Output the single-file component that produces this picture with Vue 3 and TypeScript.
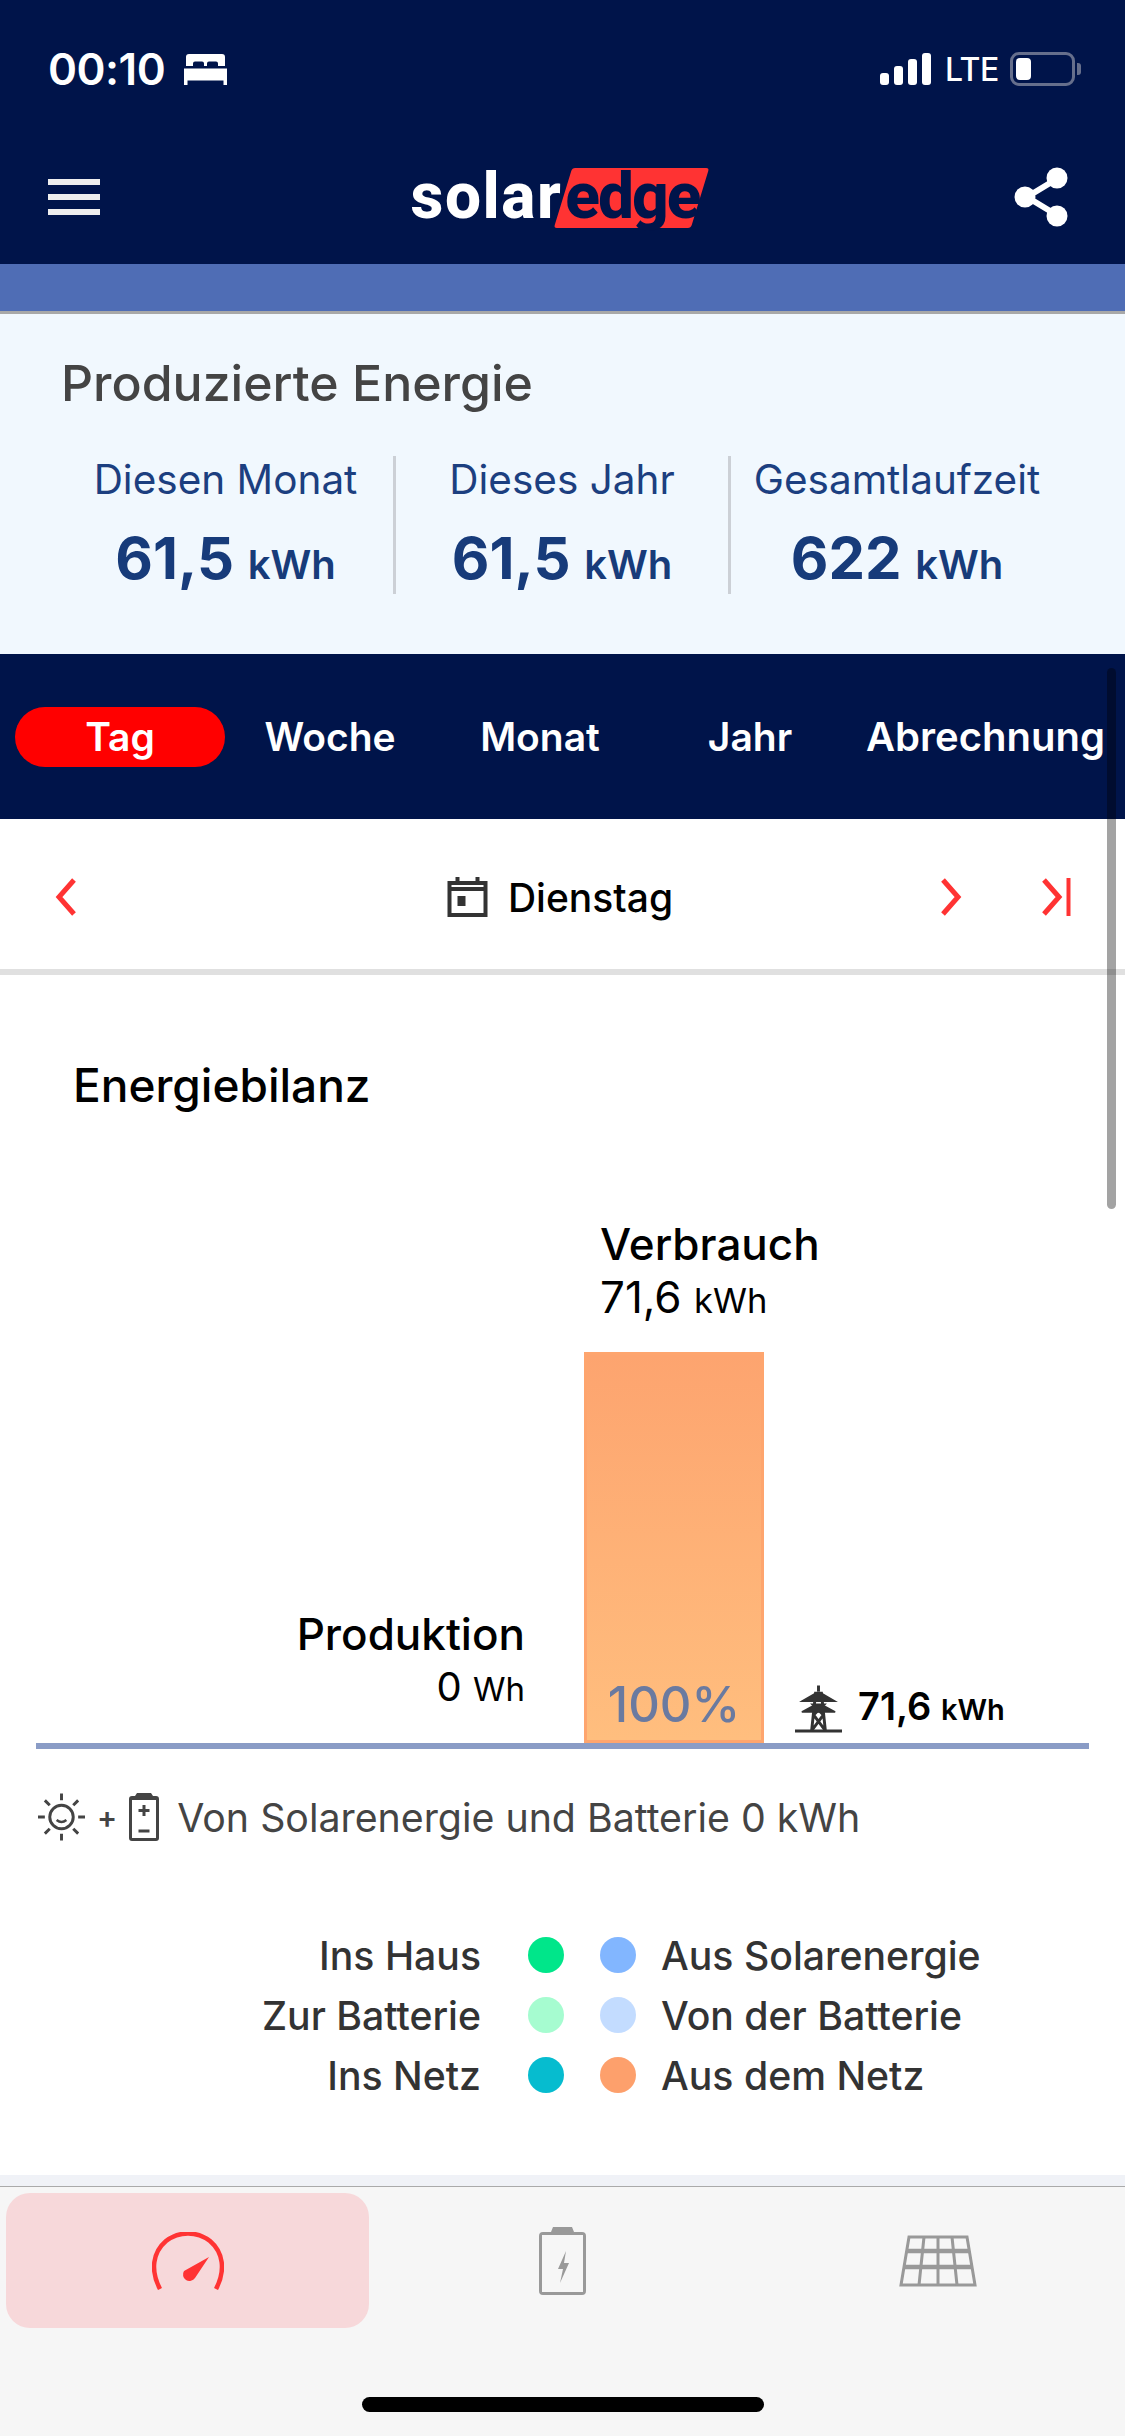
<template>
  <div class="app">
    <header class="top">
      <div class="status">
        <div class="status-left">
          <span class="time">00:10</span>
          <svg class="bed" viewBox="0 0 43 31"><path d="M5 0h33a3 3 0 0 1 3 3v9h-7V9.500a2 2 0 0 0-2-2h-7a2 2 0 0 0-2 2V12h-3V9.500a2 2 0 0 0-2-2h-7a2 2 0 0 0-2 2V12H2V3a3 3 0 0 1 3-3zM0 14.500h43V31h-3.500v-4.500h-36V31H0z" fill="#fff"/></svg>
        </div>
        <div class="status-right">
          <div class="signal">
            <i v-for="h in signalBars" :key="h" :style="{ height: `${h}px` }"></i>
          </div>
          <span class="lte">LTE</span>
          <div class="batt"><i></i></div>
          <div class="batt-nub"></div>
        </div>
      </div>
      <nav class="nav">
        <div class="burger"><i></i><i></i><i></i></div>
        <div class="logo">
          <span class="solar">solar</span>
          <span class="edge">edge</span>
        </div>
        <svg class="share" viewBox="0 0 54 60">
          <path d="M41 13 13 30l28 17" fill="none" stroke="#fff" stroke-width="6"/>
          <circle cx="43" cy="11" r="10.500" fill="#fff"/>
          <circle cx="11" cy="30" r="10.500" fill="#fff"/>
          <circle cx="43" cy="49" r="10.500" fill="#fff"/>
        </svg>
      </nav>
    </header>
    <div class="band"></div>

    <section class="produced">
      <h2>Produzierte Energie</h2>
      <div class="stats">
        <div v-for="s in stats" :key="s.label" class="stat">
          <div class="stat-label">{{ s.label }}</div>
          <div class="stat-value">{{ s.value }} <small>kWh</small></div>
        </div>
      </div>
    </section>

    <div class="tabs">
      <span v-for="t in tabs" :key="t" class="tab" :class="{ on: t === 'Tag' }">{{ t }}</span>
    </div>

    <div class="date-row">
      <svg class="chev" viewBox="0 0 22 38"><path d="M19 2 4 19l15 17" fill="none" stroke="#f33" stroke-width="5"/></svg>
      <div class="date">
        <svg class="cal" viewBox="0 0 40 40">
          <path d="M0 4h8V0h4v4h16V0h4v4h8v36H0z M4 14v22h32V14z M4 8v2h32V8z" fill="#333" fill-rule="evenodd"/>
          <rect x="10" y="19" width="8" height="10" fill="#333"/>
        </svg>
        <span>Dienstag</span>
      </div>
      <div class="date-next">
        <svg class="chev" viewBox="0 0 22 38"><path d="M3 2l15 17L3 36" fill="none" stroke="#f33" stroke-width="5"/></svg>
        <svg class="chev-last" viewBox="0 0 30 40"><path d="M3 3l15 17L3 37" fill="none" stroke="#f33" stroke-width="5"/><path d="M27.500 1v38" stroke="#f33" stroke-width="4"/></svg>
      </div>
    </div>

    <main class="main">
      <h3>Energiebilanz</h3>
      <div class="chart">
        <div class="prod">
          <div class="name">Produktion</div>
          <div class="amount">0 <small>Wh</small></div>
        </div>
        <div class="use">
          <div class="name">Verbrauch</div>
          <div class="amount">71,6 <small>kWh</small></div>
          <div class="bar">100%</div>
        </div>
        <div class="grid-val">
          <svg class="tower" viewBox="0 0 48 48" fill="none" stroke="#333" stroke-width="3">
            <path d="M0 46.500h48" />
            <path d="M24 0v6M17 46 21 8h6l4 38M17 46 29 30 19 20h10L19 30l12 16"/>
            <path d="M7 16 21 8h6l14 8zM7 27l13-7h8l13 7z" fill="#333" stroke-width="1.500"/>
          </svg>
          <span>71,6 <small>kWh</small></span>
        </div>
      </div>
      <div class="note">
        <svg class="sun" viewBox="0 0 48 48" fill="none" stroke="#444" stroke-width="3">
          <circle cx="24" cy="24" r="12"/>
          <path d="M19 27q5 4 10 0" stroke-width="2.500"/>
          <path d="M24 0v7M24 41v7M0 24h7M41 24h7M7 7l5 5M36 36l5 5M41 7l-5 5M12 36l-5 5"/>
        </svg>
        <span class="plus">+</span>
        <svg class="note-batt" viewBox="0 0 30 48">
          <path d="M8 0h14l2 3h3a3 3 0 0 1 3 3v39a3 3 0 0 1-3 3H3a3 3 0 0 1-3-3V6a3 3 0 0 1 3-3h3z M3 7v38h24V7z" fill="#444" fill-rule="evenodd"/>
          <path d="M15 12v11M9.500 17.500h11M9.500 38h11" stroke="#444" stroke-width="3"/>
        </svg>
        <span class="note-text">Von Solarenergie und Batterie 0 kWh</span>
      </div>
      <div class="legend">
        <div v-for="row in legend" :key="row.left" class="legend-row">
          <span class="l-left">{{ row.left }}</span>
          <i class="dot" :style="{ background: row.c1 }"></i>
          <i class="dot" :style="{ background: row.c2 }"></i>
          <span class="l-right">{{ row.right }}</span>
        </div>
      </div>
    </main>

    <footer class="bottom">
      <div class="bottom-tabs">
        <div class="btab active">
          <svg viewBox="0 0 72 58" width="72" height="58">
            <path d="M8 57C-2 38 1 20 14 9c13-10 31-10 44 0 13 11 16 29 6 48" fill="none" stroke="#f33" stroke-width="4.500"/>
            <path d="M57 25 43 46a6.500 6.500 0 1 1-11-7z" fill="#f33"/>
          </svg>
        </div>
        <div class="btab">
          <svg viewBox="0 0 47 68" width="47" height="68">
            <path d="M14 0h19l2 5h8a4 4 0 0 1 4 4v55a4 4 0 0 1-4 4H4a4 4 0 0 1-4-4V9a4 4 0 0 1 4-4h8z M3 8v57h41V8z" fill="#999" fill-rule="evenodd"/>
            <path d="M27 24 19 42h5l-3 14 9-20h-5z" fill="#999"/>
          </svg>
        </div>
        <div class="btab">
          <svg viewBox="0 0 78 52" width="78" height="52" fill="none" stroke="#999">
            <path d="M10 2h58l8 48H2z" stroke-width="3"/>
            <path d="M7 16h64M4.500 32h69" stroke-width="4.500"/>
            <path d="M25 2l-5 48M39 2v48M53 2l5 48" stroke-width="3"/>
          </svg>
        </div>
      </div>
      <div class="home"></div>
    </footer>

    <div class="scrollbar"></div>
  </div>
</template>

<script setup lang="ts">
const signalBars = [12, 19, 26, 32];

const stats = [
  { label: "Diesen Monat", value: "61,5" },
  { label: "Dieses Jahr", value: "61,5" },
  { label: "Gesamtlaufzeit", value: "622" },
];

const tabs = ["Tag", "Woche", "Monat", "Jahr", "Abrechnung"];

const legend = [
  { left: "Ins Haus", c1: "#00e68a", c2: "#82b6ff", right: "Aus Solarenergie" },
  { left: "Zur Batterie", c1: "#a6fcd0", c2: "#c3dcff", right: "Von der Batterie" },
  { left: "Ins Netz", c1: "#06bccf", c2: "#fda06c", right: "Aus dem Netz" },
];
</script>

<style>
html,
body {
  margin: 0;
  background: #fff;
}
</style>

<style scoped>
.app {
  position: relative;
  width: 1125px;
  height: 2436px;
  overflow: hidden;
  display: flex;
  flex-direction: column;
  background: #fff;
  font-family: Inter, "Liberation Sans", sans-serif;
  color: #000;
}

.top {
  height: 264px;
  background: #00144a;
  color: #fff;
}

.status {
  height: 138px;
  display: flex;
  align-items: center;
  justify-content: space-between;
  padding: 0 44px 0 48px;
}

.status-left,
.status-right {
  display: flex;
  align-items: center;
}

.time {
  font-size: 44px;
  font-weight: 600;
  letter-spacing: -0.5px;
}

.bed {
  width: 43px;
  height: 31px;
  margin-left: 19px;
}

.signal {
  display: flex;
  align-items: flex-end;
  gap: 5px;
  height: 32px;
}

.signal i {
  width: 9px;
  background: #fff;
  border-radius: 3px;
}

.lte {
  margin-left: 14px;
  font-size: 32px;
  font-weight: 500;
  width: 52px;
  letter-spacing: -0.5px;
}

.batt {
  margin-left: 13px;
  width: 65px;
  height: 34px;
  box-sizing: border-box;
  border: 3px solid #666f8c;
  border-radius: 9px;
  padding: 3px;
}

.batt i {
  display: block;
  width: 15px;
  height: 100%;
  background: #fff;
  border-radius: 4px;
}

.batt-nub {
  width: 4px;
  height: 12px;
  margin-left: 2px;
  background: #666f8c;
  border-radius: 0 3px 3px 0;
}

.nav {
  height: 118px;
  display: flex;
  align-items: center;
  justify-content: space-between;
  padding: 0 57px 0 48px;
}

.burger {
  width: 52px;
  display: flex;
  flex-direction: column;
  gap: 9px;
}

.burger i {
  height: 6px;
  background: #eee;
}

.logo {
  margin-right: 4px;
  display: flex;
  align-items: baseline;
  font-family: Roboto, Inter, sans-serif;
  font-size: 64px;
  line-height: 60px;
  font-weight: 800;
}

.solar {
  color: #fff;
  letter-spacing: 1.500px;
}

.edge {
  position: relative;
  z-index: 0;
  color: #00144a;
  margin-left: 3px;
  letter-spacing: -2px;
}

.edge::before {
  content: "";
  position: absolute;
  z-index: -1;
  left: -2px;
  right: -1px;
  top: 1px;
  height: 60px;
  background: #f33;
  border-radius: 3px;
  transform: skewX(-17deg);
}

.share {
  width: 54px;
  height: 60px;
}

.band {
  height: 50px;
  box-sizing: border-box;
  background: #4f6db5;
  border-bottom: 3px solid #a8a8a8;
}

.produced {
  height: 340px;
  box-sizing: border-box;
  background: #f1f8fe;
  padding: 41px 62px 0 58px;
}

.produced h2 {
  margin: 0 0 45px 3px;
  font-size: 50px;
  line-height: 56px;
  font-weight: 500;
  color: #444;
}

.stats {
  display: grid;
  grid-template-columns: repeat(3, 1fr);
}

.stat {
  height: 138px;
  text-align: center;
  border-left: 3px solid #ccd0d6;
}

.stat:first-child {
  border-left: 0;
}

.stat-label {
  font-size: 40.500px;
  line-height: 48px;
  color: #1c3f80;
  margin-bottom: 19px;
}

.stat-value {
  font-size: 58px;
  line-height: 70px;
  font-weight: 700;
  color: #173b7a;
}

.stat-value small {
  font-size: 40px;
  font-weight: 600;
}

.tabs {
  height: 165px;
  box-sizing: border-box;
  background: #00144a;
  padding: 53px 0 0 15px;
  display: flex;
  align-items: flex-start;
}

.tab {
  width: 210px;
  height: 60px;
  flex: none;
  border-radius: 30px;
  color: #fff;
  font-size: 39px;
  font-weight: 600;
  line-height: 60px;
  text-align: center;
}

.tab.on {
  background: #f00;
}

.tab:last-child {
  margin-left: 11px;
  font-size: 40px;
  white-space: nowrap;
}

.date-row {
  height: 156px;
  box-sizing: border-box;
  border-bottom: 6px solid #e0e0e0;
  padding: 6px 54px 0 55px;
  display: grid;
  grid-template-columns: 1fr auto 1fr;
  align-items: center;
}

.chev {
  width: 22px;
  height: 38px;
}

.date {
  display: flex;
  align-items: center;
  gap: 20px;
  margin-right: 6px;
  font-size: 39px;
  font-weight: 500;
}

.cal {
  width: 41px;
  height: 40px;
}

.date-next {
  display: flex;
  align-items: center;
  justify-content: flex-end;
  gap: 79px;
}

.chev-last {
  width: 30px;
  height: 40px;
}

.main {
  flex: 1;
  padding-top: 83px;
}

.main h3 {
  margin: 0 0 104px 73px;
  font-size: 46px;
  line-height: 54px;
  font-weight: 450;
}

.chart {
  margin: 0 36px;
  border-bottom: 6px solid #8a9cc6;
  display: flex;
  align-items: flex-end;
}

.name {
  font-size: 44px;
  line-height: 56px;
  font-weight: 450;
}

.amount {
  font-size: 44px;
  line-height: 50px;
}

.amount small {
  font-size: 34.500px;
}

.grid-val small {
  font-size: 29px;
}

.prod {
  width: 489px;
  text-align: right;
  padding-bottom: 29px;
}

.prod .amount {
  font-size: 40px;
}

.prod .amount small {
  font-size: 33px;
}

.use {
  margin-left: 59px;
  width: 180px;
}

.use .name,
.use .amount {
  padding-left: 16px;
  white-space: nowrap;
}

.bar {
  box-sizing: border-box;
  height: 391px;
  margin-top: 26px;
  padding-bottom: 6px;
  display: flex;
  align-items: flex-end;
  justify-content: center;
  background: linear-gradient(#fda46f, #ffbe7e);
  border: 3px solid #fea56e;
  color: #6a7aa0;
  font-size: 49px;
  font-weight: 500;
}

.grid-val {
  margin-left: 31px;
  padding-bottom: 10px;
  display: flex;
  align-items: flex-end;
  gap: 16px;
  font-size: 38px;
  line-height: 46px;
  font-weight: 600;
}

.tower {
  width: 47px;
  height: 48px;
}

.note {
  margin: 44px 0 0 38px;
  display: flex;
  align-items: center;
  height: 48px;
  color: #444;
}

.sun {
  width: 47px;
  height: 48px;
}

.plus {
  margin: 0 12px 0 12px;
  font-size: 30px;
  font-weight: 600;
}

.note-batt {
  width: 30px;
  height: 48px;
}

.note-text {
  margin-left: 18px;
  font-size: 39.300px;
}

.legend {
  margin-top: 96px;
  display: flex;
  flex-direction: column;
  gap: 24px;
}

.legend-row {
  display: flex;
  align-items: center;
  height: 36px;
  font-size: 39.200px;
  font-weight: 500;
  color: #333;
}

.l-left {
  width: 481px;
  text-align: right;
}

.dot {
  width: 36px;
  height: 36px;
  border-radius: 50%;
  margin-left: 47px;
}

.dot + .dot {
  margin-left: 36px;
}

.l-right {
  margin-left: 25px;
}

.bottom {
  height: 250px;
  position: relative;
  box-sizing: border-box;
  background: #f6f6f6;
  border-top: 1px solid #aaa;
  box-shadow: 0 -11px 0 #f0f2f7;
}

.bottom-tabs {
  display: grid;
  grid-template-columns: 375px 375px 375px;
  padding-top: 6px;
}

.btab {
  height: 135px;
  display: flex;
  align-items: center;
  justify-content: center;
}

.btab.active {
  margin: 0 6px;
  background: #f7d8da;
  border-radius: 24px;
}

.home {
  position: absolute;
  left: 362px;
  top: 210px;
  width: 402px;
  height: 15px;
  background: #000;
  border-radius: 8px;
}

.scrollbar {
  position: absolute;
  left: 1107px;
  top: 668px;
  width: 9px;
  height: 541px;
  border-radius: 5px;
  background: rgba(0, 0, 0, 0.36);
}
</style>
